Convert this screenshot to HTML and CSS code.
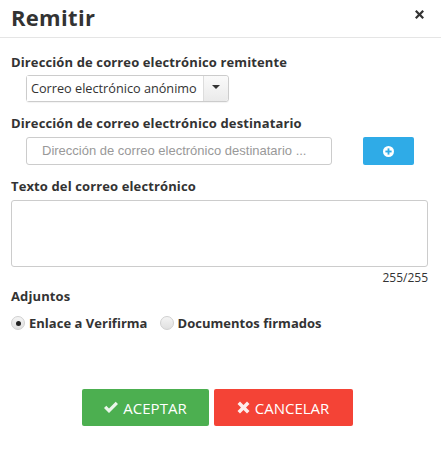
FILE: index.html
```html
<!DOCTYPE html>
<html lang="es">
<head>
<meta charset="utf-8">
<link rel="stylesheet" href="styles.css">
</head>
<body>
<div class="modal">
  <div class="modal-header">
    <h1 class="title">Remitir</h1>
    <span class="close"><svg width="9" height="9" viewBox="0 0 9 9"><path d="M0 1.6 L1.6 0 L4.5 2.9 L7.4 0 L9 1.6 L6.1 4.5 L9 7.4 L7.4 9 L4.5 6.1 L1.6 9 L0 7.4 L2.9 4.5 Z" fill="#333"/></svg></span>
  </div>
  <div class="modal-body">
    <div class="label">Dirección de correo electrónico remitente</div>
    <div class="select">
      <span class="select-text">Correo electrónico anónimo</span>
      <span class="select-btn"><span class="caret"></span></span>
    </div>
    <div class="label label-2">Dirección de correo electrónico destinatario</div>
    <div class="dest-row">
      <div class="input">Dirección de correo electrónico destinatario ...</div>
      <div class="add-btn">
        <svg width="11" height="11" viewBox="0 0 12 12"><circle cx="6" cy="6" r="6" fill="#fff"/><rect x="5" y="2.6" width="2" height="6.8" fill="#2fabe7"/><rect x="2.6" y="5" width="6.8" height="2" fill="#2fabe7"/></svg>
      </div>
    </div>
    <div class="label label-3">Texto del correo electrónico</div>
    <div class="textarea"></div>
    <div class="counter">255/255</div>
    <div class="label label-4">Adjuntos</div>
    <div class="radios">
      <span class="radio checked"></span><span class="radio-label">Enlace a Verifirma</span>
      <span class="radio second"></span><span class="radio-label">Documentos firmados</span>
    </div>
    <div class="actions">
      <div class="btn btn-ok">
        <svg width="16" height="13" viewBox="0 0 16 13"><path d="M1 7 L3.3 4.7 L6 7.4 L12.7 0.7 L15 3 L6 12 Z" fill="#eaf5ea"/></svg>
        <span>ACEPTAR</span>
      </div>
      <div class="btn btn-cancel">
        <svg width="13" height="13" viewBox="0 0 13 13"><path d="M0.5 3 L3 0.5 L6.5 4 L10 0.5 L12.5 3 L9 6.5 L12.5 10 L10 12.5 L6.5 9 L3 12.5 L0.5 10 L4 6.5 Z" fill="#fdeceb"/></svg>
        <span>CANCELAR</span>
      </div>
    </div>
  </div>
</div>
</body>
</html>
```
FILE: styles.css
```css
html, body {
  margin: 0;
  padding: 0;
  background: #fff;
}
body {
  font-family: "Open Sans", "Liberation Sans", sans-serif;
  color: #333;
  width: 441px;
  height: 449px;
}
.modal-header {
  height: 37px;
  border-bottom: 1px solid #e5e5e5;
  display: flex;
  justify-content: space-between;
  align-items: flex-start;
  padding: 0 17px 0 11px;
  box-sizing: content-box;
}
.title {
  margin: 0;
  font-size: 22px;
  font-weight: 700;
  line-height: 35px;
  letter-spacing: 0.3px;
  color: #333;
}
.close {
  display: flex;
  margin-top: 10px;
}
.modal-body {
  padding: 15px 13px 0 11px;
}
.label {
  font-size: 13px;
  font-weight: 700;
  line-height: 18px;
  letter-spacing: 0.12px;
  color: #333;
}
.select {
  margin: 4px 0 0 15px;
  width: 203px;
  height: 27px;
  border: 1px solid #ccc;
  border-radius: 3px;
  display: flex;
  box-sizing: border-box;
  box-shadow: 0 1px 1px rgba(0,0,0,0.05);
}
.select-text {
  flex: 1;
  font-size: 12.7px;
  line-height: 25px;
  padding-left: 4px;
  color: #333;
  background: #fff;
  white-space: nowrap;
  overflow: hidden;
}
.select-btn {
  width: 25px;
  border-left: 1px solid #ddd;
  background: linear-gradient(#fafafa, #eaeaea);
  display: flex;
  justify-content: center;
  padding-top: 9px;
  box-sizing: border-box;
  border-radius: 0 3px 3px 0;
}
.caret {
  width: 0;
  height: 0;
  border-left: 4px solid transparent;
  border-right: 4px solid transparent;
  border-top: 4px solid #333;
}
.label-2 {
  margin-top: 12px;
}
.dest-row {
  display: flex;
  margin: 5px 0 0 15px;
  align-items: flex-start;
}
.input {
  width: 306px;
  height: 28px;
  border: 1px solid #ccc;
  border-radius: 3px;
  box-sizing: border-box;
  font-family: "Liberation Sans", Arial, sans-serif;
  font-size: 13px;
  line-height: 26px;
  color: #999;
  padding-left: 15px;
}
.add-btn {
  margin-left: 31px;
  width: 51px;
  height: 28px;
  background: #2fabe7;
  border-radius: 2px;
  display: flex;
  align-items: center;
  justify-content: center;
}
.label-3 {
  margin-top: 12px;
}
.textarea {
  margin-top: 5px;
  height: 67px;
  border: 1px solid #ccc;
  border-radius: 3px;
  box-sizing: border-box;
}
.counter {
  text-align: right;
  font-size: 12px;
  line-height: 16px;
  color: #333;
  margin-top: 3px;
}
.label-4 {
  margin-top: 1px;
}
.radios {
  display: flex;
  align-items: center;
  margin-top: 8px;
  height: 20px;
}
.radio {
  width: 14px;
  height: 14px;
  border-radius: 50%;
  border: 1px solid #d0d0d0;
  background: linear-gradient(#f4f4f4, #e0e0e0);
  box-sizing: border-box;
  margin-right: 4px;
  position: relative;
}
.radio.checked::after {
  content: "";
  position: absolute;
  left: 3.5px;
  top: 3.5px;
  width: 5px;
  height: 5px;
  border-radius: 50%;
  background: #222;
}
.radio.second {
  margin-left: 12px;
}
.radio-label {
  font-size: 13px;
  font-weight: 700;
  letter-spacing: 0.02px;
  color: #333;
}
.actions {
  display: flex;
  justify-content: center;
  gap: 5px;
  margin-top: 56px;
  padding-right: 5px;
}
.btn {
  height: 37px;
  border-radius: 2px;
  display: flex;
  align-items: center;
  justify-content: center;
  gap: 4px;
  color: #fff;
  font-size: 15px;
  box-sizing: border-box;
}
.btn-ok {
  width: 127px;
  background: #4caf50;
}
.btn-cancel {
  width: 139px;
  background: #f44336;
  gap: 5px;
}
```
